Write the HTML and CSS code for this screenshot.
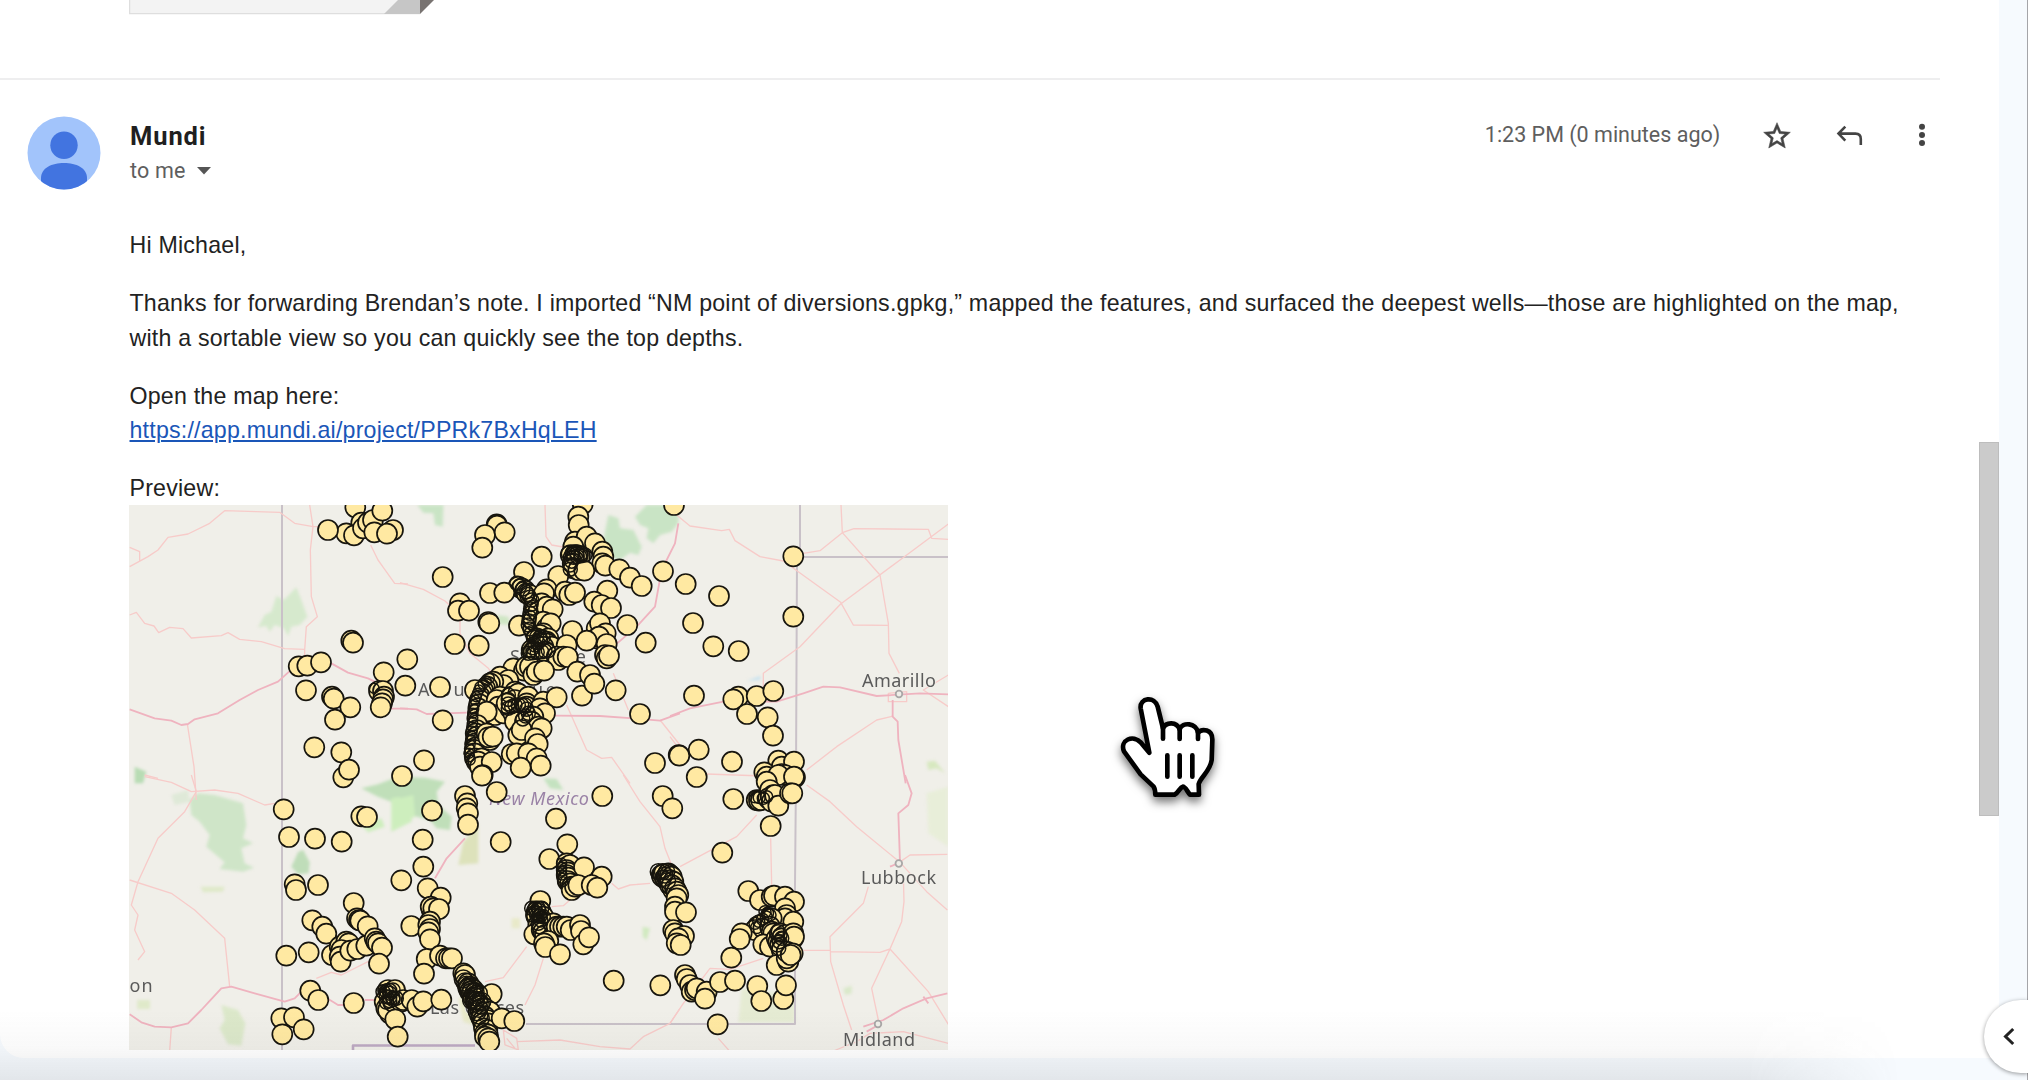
FILE: index.html
```html
<!DOCTYPE html>
<html lang="en">
<head>
<meta charset="utf-8">
<title>Mundi</title>
<link rel="stylesheet" href="styles.css">
</head>
<body>
<div class="page">
  <main class="thread">
    <div class="attachment">
      <svg width="306" height="15" viewBox="0 0 306 15"><path d="M.75-2V13.5H291" fill="#f3f3f3" stroke="#dedede" stroke-width="1.5"/><path d="M0 0H291V13H1.5V0z" fill="#f3f3f3"/><path d="M255 14 269 0H291V14z" fill="#c6c6c6"/><path d="M291 0H305L291 14z" fill="#787371"/></svg>
    </div>
    <article class="message">
      <svg class="avatar" width="74" height="74" viewBox="0 0 74 74"><clipPath id="disc"><circle cx="37" cy="37" r="36.5"/></clipPath><g clip-path="url(#disc)"><path d="M0 0H74V74H0z" fill="#a2c4fb"/><circle cx="37" cy="29.3" r="13.7" fill="#4274e0"/><path d="M14 80V62C14 52 25 47 37 47S60 52 60 62V80z" fill="#4274e0"/></g></svg>
      <div class="content">
        <header class="head">
          <div class="sender">
            <div class="name">Mundi</div>
            <div class="to">to me <svg class="caret" width="14" height="8" viewBox="0 0 14 8"><path d="M0 0H14L7 7.6z" fill="#555"/></svg></div>
          </div>
          <div class="tools">
            <span class="time">1:23 PM (0 minutes ago)</span>
            <svg width="32" height="32" viewBox="0 0 24 24"><path fill="#444" stroke="#444" stroke-width=".4" d="M22 9.24l-7.19-.62L12 2 9.19 8.63 2 9.24l5.46 4.73L5.82 21 12 17.27 18.18 21l-1.63-7.03L22 9.24zM12 15.4l-3.76 2.27 1-4.28-3.32-2.88 4.38-.38L12 6.1l1.71 4.04 4.38.38-3.32 2.88 1 4.28L12 15.4z"/></svg>
            <svg width="32" height="32" viewBox="0 0 32 32"><path d="M12.3 6.6 5.5 13.6 12.3 20.6M5.5 13.6H22.5Q27.8 13.6 27.8 19V25" fill="none" stroke="#444" stroke-width="2.6"/></svg>
            <svg width="32" height="32" viewBox="0 0 32 32" fill="#444"><circle cx="16" cy="6.8" r="3"/><circle cx="16" cy="14.9" r="3"/><circle cx="16" cy="23" r="3"/></svg>
          </div>
        </header>
        <div class="body">
          <p>Hi Michael,</p>
          <p>Thanks for forwarding Brendan’s note. I imported “NM point of diversions.gpkg,” mapped the features, and surfaced the deepest wells—those are highlighted on the map,<br>with a sortable view so you can quickly see the top depths.</p>
          <p>Open the map here:<br><a href="#">https://app.mundi.ai/project/PPRk7BxHqLEH</a></p>
          <p>Preview:</p>
          <svg class="map" width="819" height="545" viewBox="129 505 819 545">
            <path d="M129 505H948V1050H129z" fill="#f0efe9"/>
            <defs><filter id="soft"><feGaussianBlur stdDeviation="1.8"/></filter></defs>
            <g filter="url(#soft)">
              <g transform="translate(128 500) scale(.33333)">
                <path fill="#d6e9cd" d="M390 382 410 345 430 335 445 288 468 300 505 262 520 300 538 350 515 375 490 380 480 408 468 385 440 375 425 395 415 378z"/>
                <path fill="#b8dcb4" d="M20 800 55 815 45 850 20 850z"/>
              </g>
              <g transform="translate(400 500) scale(.33333)">
                <path fill="#c9e4c5" d="M52 15H130L128 80 105 75 100 40 70 38z"/>
                <path fill="#c9e4c5" d="M625 45 655 55 660 85 700 90 725 140 715 165 690 158 660 180 625 170 610 120zM705 50 740 15H835V70L815 95 780 105 760 130 740 115 745 85 720 75z"/>
                <path fill="#cfe6c4" d="M290 345 325 350 330 375 295 372z"/>
              </g>
              <g transform="translate(670 500) scale(.33333)">
                <path fill="#c5e2f0" d="M230 542 272 528 270 540z"/>
                <path fill="#d7e8c0" d="M770 785 795 782 825 820 800 805 775 810z"/>
                <path fill="#e8eed9" d="M770 880 835 860V1040L775 1000z"/>
              </g>
              <g transform="translate(128 775) scale(.33333)">
                <path fill="#cfe5c8" d="M185 75 210 55 260 60 345 85 355 150 345 190 375 205 340 220 350 265 378 278 345 290 275 282 290 262 235 215 245 180 215 140 190 120z"/>
                <path fill="#dfe9d8" d="M130 60 180 45 185 80 140 90z"/>
                <path fill="#c0dfb9" d="M700 40 750 28 810 5 850 5V140L800 130 790 80 750 65z"/>
                <path fill="#cdeebd" d="M790 70 850 60V140L790 170zM700 150 760 130 770 155 720 172z"/>
                <path fill="#bfddb9" d="M490 275 510 232 525 224 545 262 542 295 510 298z"/>
                <path fill="#dfe9c9" d="M218 335 290 335 285 350 225 352zM28 675H66V702H28z"/>
                <path fill="#dce8ca" d="M280 690 330 705 352 745 340 812 300 808 275 760 290 735z"/>
              </g>
              <g transform="translate(400 775) scale(.33333)">
                <path fill="#c0dfb9" d="M0 5 75 8 135 20 110 50 115 90 155 125 150 165 110 160 90 135 30 120 0 135z"/>
                <path fill="#cdeebd" d="M0 70 40 60 45 125 0 145z"/>
                <path fill="#dde2bb" d="M190 200 235 150V265L175 270z"/>
                <path fill="#c4e2c0" d="M430 10 470 12 490 45 450 40z"/>
                <path fill="#e8e9c9" d="M175 670 205 665 220 750 190 740zM335 430H360V460H335z"/>
                <path fill="#d0e9c0" d="M728 455 750 460 740 495 728 485z"/>
              </g>
              <g transform="translate(670 775) scale(.33333)">
                <path fill="#e5ebd3" d="M215 640 375 660V742H205z"/>
                <path fill="#d9e8c9" d="M520 640 545 632 545 655 525 660z"/>
              </g>
            </g>
            <g fill="none" stroke-linejoin="round">
              <g stroke="#c9c1c8" stroke-width="2">
                <path d="M282 505V1050M800 505V557H948M797 557 796 775 795 885 795 1024H526"/>
                <path d="M353 1050V1045.500H475" stroke="#bda9c2" stroke-width="2.600"/>
              </g>
              <g stroke="#f7cbc9" stroke-width="4">
                <g transform="translate(128 500) scale(.33333)">
                  <path d="M5 200 60 170 90 150 120 112 180 102 245 70 290 32 455 37 500 70 555 80 590 80M545 15 555 80 547 150 550 290 568 350 535 380 530 450M5 142 35 155V185M5 345 25 337 50 370 78 378 92 398 125 382 165 386 190 414 280 407 300 398 335 418 400 425 470 446 530 448V470M728 135 750 180 800 250 840 252M178 672 198 800 205 900M50 825 90 835"/>
                </g>
                <g transform="translate(400 500) scale(.33333)">
                  <path d="M435 15 438 110 455 135 540 150M0 248 70 268 135 303 180 345 180 400 210 460 265 505 295 545M500 615 560 750 605 775 635 772 690 850M780 660 840 735M640 520 685 630"/>
                </g>
                <g transform="translate(670 500) scale(.33333)">
                  <path d="M20 45 60 78 155 92 178 88 195 122 270 170 340 183 512 307 550 375 653 376M513 15 517 98 630 225 655 370 657 460 688 520M517 98 552 86 775 88 785 115 835 118M835 72 690 180 512 312 390 440 280 520 280 560M400 160 450 152 517 98M835 525 760 570 835 620M670 648 620 660 500 740 410 810M655 580 710 575V605H655zM0 710 30 750M110 822 280 828"/>
                </g>
                <g transform="translate(128 775) scale(.33333)">
                  <path d="M50 5 130 22 190 50 260 45 330 55 410 90 440 85M190 0 205 50 170 110 90 190 30 320 10 390 30 420 20 465 50 530 30 555M5 315 130 355 200 405 290 490 305 635M130 757 125 828M565 610 610 592 640 600 720 560 760 590"/>
                </g>
                <g transform="translate(400 775) scale(.33333)">
                  <path d="M255 620 310 608 380 515M430 550 405 630 375 690M455 395 490 392 510 375M635 325 655 342 690 330 750 325M670 0 720 80 780 155 795 220 815 270M350 800 480 795 600 815 690 822 730 785 810 745 840 700M310 765 350 790 355 825 315 810zM320 790 345 820"/>
                </g>
                <g transform="translate(670 775) scale(.33333)">
                  <path d="M410 30 480 80 560 155 690 262 770 350 832 405M30 275 110 232 200 185 260 120M302 190 305 330M400 526H480M595 335 580 385 480 485 482 560 520 690 545 765M480 530 630 532 660 522M700 300 702 380 695 440 660 522 605 640 625 735M660 522 775 650 835 748M688 262 720 240 832 238M0 745 40 685 120 580 180 583 280 550M490 828 560 800 600 775 700 770 835 805M145 790 180 830"/>
                </g>
              </g>
              <g stroke="#efb3bf" stroke-width="5.500">
                <path transform="translate(128 500) scale(.33333)" d="M5 628 80 655 130 662 160 675 180 672 200 658 270 640 335 600 390 570 450 545 500 500M610 490 660 518 720 535 740 545M790 626H840"/>
                <path transform="translate(400 500) scale(.33333)" d="M0 625 50 628 80 642 200 638M465 647 600 648 700 655 780 662 840 640M835 70 825 130 785 210 765 320 710 380 640 440"/>
                <path transform="translate(670 500) scale(.33333)" d="M0 648 60 625 160 605 320 605 400 580 460 560 510 562 620 588 750 580 835 583M668 600V650L683 665 685 720 707 850"/>
                <path transform="translate(128 775) scale(.33333)" d="M5 718 40 742 80 755 130 757 180 745 220 705 280 640 310 635 380 655 470 680 500 670 530 640M590 665 630 690 660 690M710 675H750"/>
                <path transform="translate(400 775) scale(.33333)" d="M195 190 140 250 105 310"/>
                <path transform="translate(670 775) scale(.33333)" d="M705 0 725 55 715 90 685 115 690 262 660 275M832 655 770 670 700 700 640 735 580 755M625 750 590 770M760 665 775 685"/>
              </g>
              <g stroke="#a9a7a7" stroke-width="1.800" fill="#f0efe9"><circle cx="899" cy="694" r="3.300"/><circle cx="898.800" cy="863.500" r="3.300"/><circle cx="878" cy="1024" r="3.300"/></g>
            </g>
            <g class="labels">
              <text x="418" y="696" textLength="138">Albuquerque</text>
              <text x="510" y="663" textLength="76">Santa Fe</text>
              <text x="862" y="687" textLength="74">Amarillo</text>
              <text x="861" y="884" textLength="75">Lubbock</text>
              <text x="843" y="1046" textLength="72">Midland</text>
              <text x="129.500" y="992" textLength="23">on</text>
              <text x="430" y="1014" textLength="94">Las Cruces</text>
              <text class="state" x="489" y="805" textLength="100">New Mexico</text>
            </g>
            <g id="wells" fill="#ffe9a2" stroke="#17150e" stroke-width="1.700"></g>
          </svg>
        </div>
      </div>
    </article>
  </main>
  <div class="scroll"><div class="thumb"></div></div>
  <aside class="rail"></aside>
  <div class="shade"></div>
  <div class="toggle"><svg width="12" height="20" viewBox="0 0 12 20"><path d="M10.200 2 2.500 9.500 10.200 17" fill="none" stroke="#222" stroke-width="3"/></svg></div>
  <svg class="cursor" width="180" height="160" viewBox="0 0 540 480"><path d="M208 278 182 145C178 112 225 108 233 140L249 205C258 185 290 184 299 208 307 185 349 188 354 218 366 205 398 207 397 240L395 300C390 335 362 350 356 372L357 404H330C322 395 315 378 308 380 300 382 296 398 284 404H226C226 392 226 388 221 380L182 343 132 274C118 240 160 222 183 248Z" fill="#fff" stroke="#000" stroke-width="14" stroke-linejoin="round"/><path d="M249 200V236M299 205V237M354 215V237M262 286V350M299 286V350M337 286V350" stroke="#000" stroke-width="14" stroke-linecap="round"/></svg>
</div>
<script src="wells.js"></script>
</body>
</html>
```
FILE: wells.js
```js
// Wells grouped by map tile: tile origin, then x y pairs in thirds of a pixel.
const tiles = [
  [128, 500, "682 22 700 68 655 100 678 106 705 85 720 68 735 60 763 32 795 90 739 97 777 101 600 90 670 422 675 428 512 499 538 497 579 487 534 571 612 590 617 596 667 622 621 659 767 517 753 573 765 573 768 590 765 598 762 610 758 622 559 742 640 757 646 832 663 809"],
  [400, 500, "22 478 16 557 120 561 6 828 128 231 290 73 291 77 255 105 314 97 247 143 425 170 548 12 535 50 536 75 525 125 560 110 520 140 585 130 512 165 525 165 607 155 520 175 530 165 540 168 530 172 522 182 610 170 518 190 520 205 535 210 475 228 607 190 616 197 553 212 658 208 690 233 725 258 789 214 372 216 355 260 365 265 375 272 380 280 390 285 270 279 313 278 440 268 430 290 432 280 495 275 508 285 525 278 622 272 583 305 605 315 633 324 180 310 174 332 207 332 265 366 268 370 164 432 236 437 357 377 682 375 737 428 425 310 405 330 410 350 405 375 400 385 410 345 400 360 415 335 440 320 458 328 430 365 440 385 452 370 590 385 600 370 617 400 590 415 597 410 517 393 560 422 620 432 615 465 620 475 627 467 430 400 420 405 410 415 445 415 440 425 420 430 405 440 395 450 415 450 440 430 455 440 500 435 400 455 410 465 430 440 435 455 470 470 475 480 490 470 503 471 532 515 570 525 546 587 583 551 647 571 720 642 765 789 836 765 340 505 372 512 378 500 390 500 400 525 410 515 432 512 300 530 325 540 310 555 280 545 270 550 262 560 255 565 250 572 245 580 240 590 225 570 240 600 238 612 235 625 234 640 232 655 235 665 300 590 290 600 295 620 265 640 285 645 310 640 260 635 345 575 335 590 345 600 335 610 355 580 330 625 340 640 345 600 320 610 355 650 345 665 385 590 380 610 385 630 390 640 380 620 375 665 430 605 470 592 420 625 435 640 400 650 395 665 415 680 425 685 232 675 230 690 227 700 230 710 228 720 226 730 227 742 225 750 224 760 226 775 230 785 245 775 260 700 270 720 265 712 278 710 355 705 365 690 405 715 413 732 335 762 350 760 385 760 410 775 422 797 235 785 240 800 275 786 362 803 248 825 128 661 72 781"],
  [670, 500, "12 15 47 252 147 288 370 169 370 350 69 369 130 439 206 453 72 587 205 590 190 598 260 588 310 573 231 642 293 652 309 707 28 767 86 749 80 831 186 785 325 782 335 800 372 785 283 817 335 822 345 825 290 840 375 832"],
  [128, 775, "467 103 700 124 717 126 483 186 561 191 641 200 500 328 504 345 570 330 553 436 583 455 595 476 677 384 687 430 693 435 697 437 719 454 475 542 542 532 612 540 635 515 655 500 662 505 640 525 635 545 638 560 667 527 688 522 715 512 740 490 745 500 750 505 762 518 753 566 547 647 571 675 677 684 460 730 498 727 463 778 527 763 780 645 785 655 780 665 790 660 800 665 775 675 780 690 770 680 775 700 785 715 780 705 795 680 820 680 802 733 809 785"],
  [400, 775, "-15,645 10,675 35,675 52,695 70,679 124,674 246,2 290,51 195,63 202,85 200,100 204,115 204,149 96,107 302,201 68,194 468,131 607,63 70,275 4,316 83,340 122,368 95,405 92,395 100,400 117,402 34,453 90,440 85,450 90,462 85,472 90,493 80,552 72,596 120,542 138,550 147,550 156,550 190,595 195,600 205,625 210,635 205,640 215,640 220,645 210,650 215,655 225,655 230,660 220,668 235,665 225,675 240,670 230,680 235,685 245,680 275,657 240,690 245,700 240,705 255,700 250,712 245,720 270,710 255,725 250,735 262,735 250,745 265,745 252,760 262,765 255,775 263,778 255,785 265,790 268,800 305,730 343,738 502,208 448,252 500,265 505,275 510,270 500,285 503,292 500,300 505,308 503,318 510,325 515,335 515,345 552,277 605,305 525,335 535,330 575,330 592,338 421,378 410,410 415,418 408,420 418,430 422,410 410,425 425,428 430,425 425,440 430,445 415,450 420,460 403,478 425,465 430,470 435,480 460,445 470,455 480,455 490,455 500,455 512,465 540,450 543,468 550,508 567,487 445,498 432,505 436,516 480,538 641,617 781,631 785,300 787,305 790,298 795,310 800,305 805,320 810,320 815,335 810,330 820,345"],
  [670, 775, "-22 63 7 100 190 72 157 233 290 5 325 0 372 5 290 20 260 75 267 77 273 75 300 45 310 60 295 70 305 80 315 60 325 92 360 55 367 55 302 153 -5 295 0 300 5 305 0 315 10 320 5 330 15 340 20 350 25 360 20 370 15 395 15 410 48 412 10 465 15 475 42 483 25 490 20 505 32 510 45 600 50 612 60 630 65 650 75 645 80 640 110 650 105 671 150 621 195 617 262 633 274 678 340 672 348 631 143 748 235 348 270 375 305 365 312 362 345 365 372 380 300 430 290 440 345 400 350 420 345 430 370 440 305 430 260 460 270 450 255 465 280 460 300 455 305 470 310 475 215 475 209 492 184 548 280 508 300 515 320 490 330 480 325 500 330 475 345 480 335 490 340 500 330 510 340 515 335 525 370 475 370 490 372 485 320 570 355 560 350 550 350 530 368 535 362 540"]
];
// Tightly packed wells, whose outlines merge: tile origin, ring radius, then the line they follow.
const dense = [
  [400, 500, 5, "268 535 240 560 225 600 219 640 217 680 212 720 207 760 212 790"],
  [400, 500, 7, "505 160 530 158 555 165 520 172 510 195 512 220"],
  [400, 500, 7, "350 250 378 275 395 300 390 340 385 375 400 410 430 412 405 435 385 460 425 455 455 450"],
  [400, 500, 7, "325 585 325 625 345 615 375 615 385 640 360 665"],
  [400, 775, 9, "190 612 205 640 235 655 215 675 245 680 232 710 245 740"],
  [400, 775, 7, "395 400 425 400 400 420 430 425 415 445 420 465"],
  [400, 775, 5, "485 265 485 300 490 330"],
  [400, 775, 8, "775 290 800 290 790 310 815 325"],
  [128, 775, 7, "765 650 795 645 775 665 805 670 765 685"],
  [670, 775, 7, "325 470 335 490 322 510 330 530"],
  [670, 775, 6, "285 410 300 420 255 445 265 470"],
  [670, 775, 6, "255 65 280 70 300 60"],
  [128, 500, 5, "738 565 740 580"]
];
const layer = document.getElementById("wells");
function circle(x, y, r) {
  const c = document.createElementNS("http://www.w3.org/2000/svg", "circle");
  c.setAttribute("cx", x.toFixed(1));
  c.setAttribute("cy", y.toFixed(1));
  c.setAttribute("r", r);
  layer.append(c);
  return c;
}
for (const [ox, oy, list] of tiles) {
  const n = list.split(/[ ,]/).map(Number);
  for (let i = 0; i < n.length; i += 2) circle(ox + n[i] / 3, oy + n[i + 1] / 3, 10);
}
for (const [ox, oy, r, list] of dense) {
  const n = list.split(" ").map(Number);
  for (let i = 0; i + 3 < n.length; i += 2) {
    const dx = n[i + 2] - n[i], dy = n[i + 3] - n[i + 1];
    const steps = Math.max(1, Math.round(Math.hypot(dx, dy) / 12));
    for (let s = 0; s < steps; s++) {
      const c = circle(ox + (n[i] + dx * s / steps) / 3, oy + (n[i + 1] + dy * s / steps) / 3, r);
      c.setAttribute("class", "ring");
    }
  }
}
```
FILE: styles.css
```css
body { margin: 0; }
.page {
  position: relative;
  display: grid;
  grid-template-columns: 1979px 20px 1fr;
  height: 1080px;
  overflow: hidden;
  background: #f6fafe;
  font-family: "Liberation Sans", Arial, sans-serif;
}
.thread { height: 1058px; background: #fff; border-bottom-left-radius: 24px; }
.attachment { height: 78px; padding-left: 129px; }
.attachment svg { display: block; }
.message {
  display: flex;
  width: 1940px;
  box-sizing: border-box;
  padding: 35px 0 0 27px;
  border-top: 2px solid #eeeeef;
}
.avatar { flex: none; margin: 1px 28px 0 0; }
.content { flex: 1; }
.head { display: flex; justify-content: space-between; height: 113px; font-family: Roboto, sans-serif; }
.name { margin: 5px 0 0 1px; font: 700 25.500px/32px Roboto, sans-serif; letter-spacing: .9px; color: #1f1f1f; }
.to { display: flex; align-items: center; gap: 11px; margin: 4px 0 0 1px; font-size: 21.500px; line-height: 30px; letter-spacing: .2px; color: #5e5e5e; }
.tools { display: flex; align-items: center; gap: 40.600px; height: 32px; margin: 5px 2px 0 0; }
.time { margin-top: -4px; font-size: 21.500px; color: #5e5e5e; white-space: nowrap; }
.body { font-size: 23.200px; line-height: 34.700px; letter-spacing: .203px; color: #222; white-space: nowrap; }
.body p { margin: 0 0 23.300px .5px; }
.body p:nth-of-type(4) { margin-bottom: -1px; }
.body a { color: #1a56b8; text-decoration-thickness: 2px; text-underline-offset: 2px; }
.map { display: block; letter-spacing: 0; }
.labels { font: 18px "Noto Sans", sans-serif; fill: #5a5a5a; stroke: #f0efe9; stroke-width: 1.500px; paint-order: stroke; }
.labels .state { font-style: italic; fill: #9a82a6; }
.ring { fill: none; stroke-width: 1.500px; }
.scroll { height: 1058px; background: #fff; padding-top: 442px; box-sizing: border-box; }
.thumb { height: 374px; box-sizing: border-box; background: #cbcbcb; border: 1px solid #bdbdbd; }
.rail { border-right: 1px solid #a5a5a9; }
.shade {
  position: absolute;
  left: 0;
  top: 1010px;
  width: 1900px;
  height: 70px;
  background: linear-gradient(rgba(60,60,60,0), rgba(60,60,60,.03) 55%, rgba(60,60,60,.1));
  -webkit-mask-image: linear-gradient(90deg, #000 92%, transparent);
  mask-image: linear-gradient(90deg, #000 92%, transparent);
}
.toggle {
  position: absolute;
  left: 1984px;
  top: 1000px;
  width: 44px;
  height: 73px;
  box-sizing: border-box;
  padding: 27px 0 0 19px;
  border-radius: 37px 0 0 37px;
  background: #fff;
  box-shadow: 0 1px 4px rgba(0,0,0,.4);
}
.toggle svg { display: block; }
.cursor { position: absolute; left: 1080px; top: 660px; filter: drop-shadow(0 5px 5px rgba(0,0,0,.55)); }
```
